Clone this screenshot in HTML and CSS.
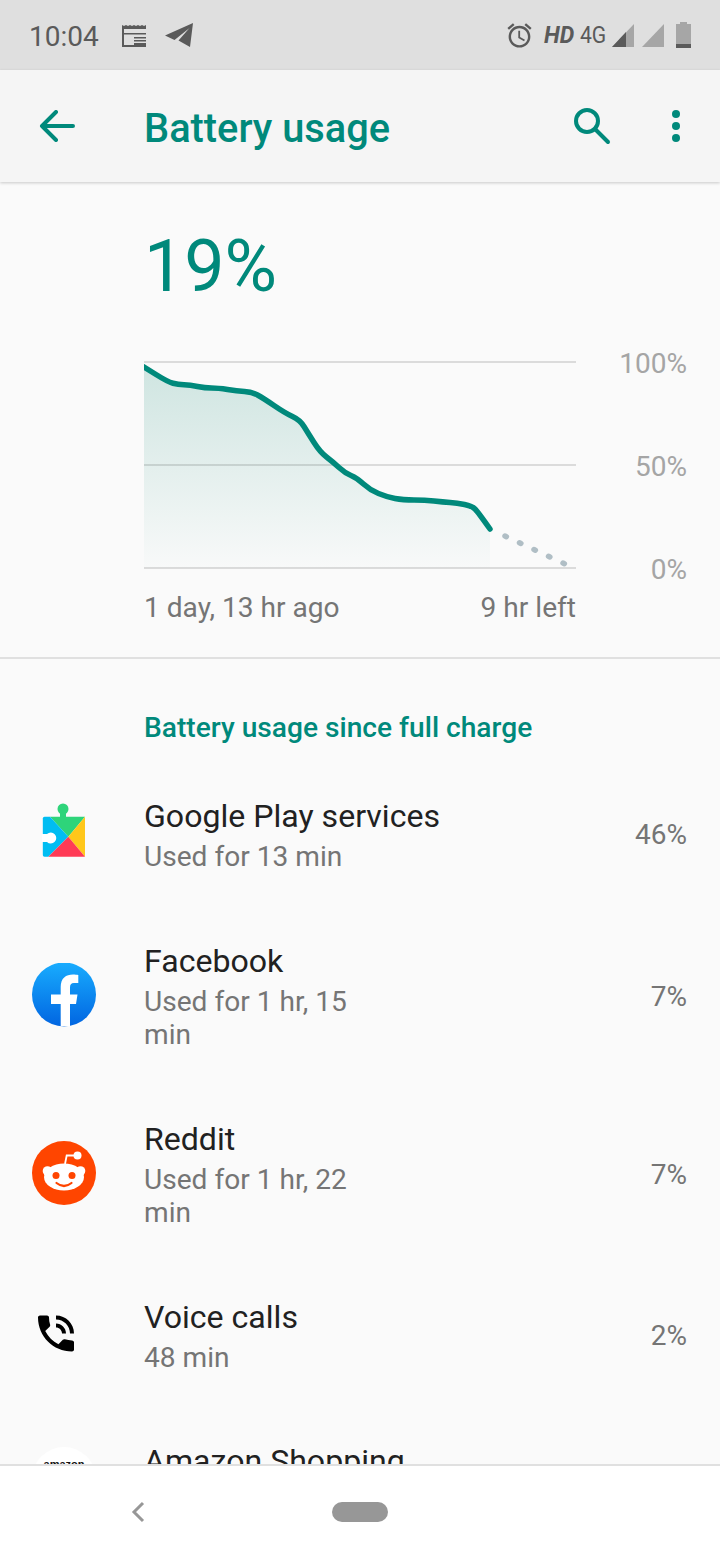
FILE: index.html
```html
<!DOCTYPE html>
<html lang="en">
<head>
<meta charset="utf-8">
<title>Battery usage</title>
<link rel="stylesheet" href="styles.css">
</head>
<body>
<div class="screen">
  <header class="status">
    <span class="time">10:04</span>
    <svg class="st-cal" width="26" height="23" viewBox="0 0 26 23"><path fill="#5a5a5a" d="M0 1l2 1 2-1 2 1 2-1 2 1 2-1 2 1 2-1 2 1 2-1 2 1 2-1v22H0z"/><path fill="#dfdfdf" d="M2 5h22v16H2z"/><path fill="#5a5a5a" d="M2 9h22v1.500H2zM12 13h12v1.500H12zM12 16h12v1.500H12zM12 19h12v2H12z"/></svg>
    <svg class="st-tg" width="28" height="24" viewBox="0 0 28 24"><path fill="#5a5a5a" d="M28 0L0 12.500l9.500 4.500L24.500 5 13.500 17.500 25 24z"/></svg>
    <span class="st-spacer"></span>
    <svg class="st-alarm" width="29" height="29" viewBox="0 0 24 24"><path fill="#5a5a5a" d="M22 5.720l-4.600-3.860-1.290 1.530 4.600 3.860L22 5.720zM7.880 3.390L6.600 1.860 2 5.710l1.290 1.530 4.590-3.850zM12.500 8H11v6l4.750 2.850.75-1.230-4-2.370V8zM12 4c-4.970 0-9 4.030-9 9s4.020 9 9 9c4.970 0 9-4.030 9-9s-4.030-9-9-9zm0 16c-3.870 0-7-3.130-7-7s3.130-7 7-7 7 3.130 7 7-3.130 7-7 7z"/></svg>
    <span class="st-hd">HD</span>
    <span class="st-4g">4G</span>
    <svg class="st-sig1" width="22" height="23" viewBox="0 0 22 23"><path fill="#a6a6a6" d="M22 0v23H0z"/><path fill="#5a5a5a" d="M14 8v15H0z"/></svg>
    <svg class="st-sig2" width="22" height="23" viewBox="0 0 22 23"><path fill="#a6a6a6" d="M22 0v23H0z"/></svg>
    <svg class="st-bat" width="15" height="26" viewBox="0 0 15 26"><path fill="#a6a6a6" d="M4 0h7v2h4v24H0V2h4z"/><path fill="#5a5a5a" d="M0 22h15v4H0z"/></svg>
  </header>

  <div class="toolbar">
    <svg class="tb-back" width="36" height="32" viewBox="0 0 36 32"><path fill="none" stroke="#00897b" stroke-width="4" stroke-linecap="round" stroke-linejoin="round" d="M34 16H3M17 2L3 16l14 14"/></svg>
    <h1 class="tb-title">Battery usage</h1>
    <svg class="tb-search" width="38" height="38" viewBox="0 0 38 38"><circle cx="14" cy="14" r="11" fill="none" stroke="#00897b" stroke-width="4"/><path stroke="#00897b" stroke-width="4" stroke-linecap="round" d="M22 22l13 13"/></svg>
    <svg class="tb-more" width="8" height="32" viewBox="0 0 8 32"><circle cx="4" cy="4" r="4" fill="#00897b"/><circle cx="4" cy="16" r="4" fill="#00897b"/><circle cx="4" cy="28" r="4" fill="#00897b"/></svg>
  </div>

  <main class="content">
    <section class="summary">
      <div class="percent">19%</div>
      <div class="chart-row">
        <div class="chart-col">
          <svg class="chart" width="432" height="210" viewBox="144 360 432 210">
            <defs>
              <linearGradient id="area" x1="0" y1="0" x2="0" y2="1">
                <stop offset="0" stop-color="#cfe5e1"/>
                <stop offset="1" stop-color="#f8f9f9"/>
              </linearGradient>
            </defs>
            <path fill="url(#area)" d="M144 367L156 374.500Q168 382 173 383.250Q178 384.500 184 384.750Q190 385 197.500 386.500Q205 388 211.500 388Q218 388 227.500 389.500Q237 391 244.500 391.500Q252 392 257.500 395Q263 398 274 405.500Q285 413 292.500 416.500Q300 420 304 426.500Q308 433 314 442.500Q320 452 326.500 457Q333 462 339 467.500Q345 473 351 475.500Q357 478 363.500 484Q370 490 378.500 493.500Q387 497 395 498.500Q403 500 414 500Q425 500 434 501Q443 502 450 502.500Q457 503 464.500 504.500Q472 506 475 509Q478 512 490 529V568H144z"/>
            <path class="grid" d="M144 362H576M144 465H576M144 568H576"/>
            <path class="dots" d="M505 536L565 564"/>
            <path class="line" d="M144 367L156 374.500Q168 382 173 383.250Q178 384.500 184 384.750Q190 385 197.500 386.500Q205 388 211.500 388Q218 388 227.500 389.500Q237 391 244.500 391.500Q252 392 257.500 395Q263 398 274 405.500Q285 413 292.500 416.500Q300 420 304 426.500Q308 433 314 442.500Q320 452 326.500 457Q333 462 339 467.500Q345 473 351 475.500Q357 478 363.500 484Q370 490 378.500 493.500Q387 497 395 498.500Q403 500 414 500Q425 500 434 501Q443 502 450 502.500Q457 503 464.500 504.500Q472 506 475 509Q478 512 490 529"/>
          </svg>
          <div class="axis-x"><span>1 day, 13 hr ago</span><span>9 hr left</span></div>
        </div>
        <div class="axis-y"><span>100%</span><span>50%</span><span>0%</span></div>
      </div>
    </section>

    <h2 class="section-title">Battery usage since full charge</h2>

    <div class="row">
      <svg class="app-icon" width="64" height="64" viewBox="0 0 64 64">
        <circle cx="31" cy="7" r="5.500" fill="#2ed47a"/>
        <path fill="#2ed47a" d="M28 8h6v8h-6zM18 14.700h35L36.300 34.700z"/>
        <path fill="#00bdf2" d="M12.500 14.700H18l18.300 20-20 20h-3.800a1.700 1.700 0 0 1-1.700-1.700V16.400a1.700 1.700 0 0 1 1.700-1.700z"/>
        <path fill="#ffc71a" d="M53 14.700v40L36.300 34.700z"/>
        <path fill="#ff3a55" d="M36.300 34.700L53 54.700H16.300z"/>
        <path fill="#fff" d="M10 32h5a5.500 5.500 0 1 1 0 8h-5z"/>
      </svg>
      <div class="row-text">
        <div class="row-title">Google Play services</div>
        <div class="row-sub">Used for 13 min</div>
      </div>
      <span class="row-pct">46%</span>
    </div>

    <div class="row">
      <svg class="app-icon" width="64" height="64" viewBox="0 0 64 64">
        <defs>
          <linearGradient id="fb" x1="0" y1="0" x2="0" y2="1">
            <stop offset="0" stop-color="#18acfe"/>
            <stop offset="1" stop-color="#0165e1"/>
          </linearGradient>
        </defs>
        <circle cx="32" cy="31.500" r="32" fill="url(#fb)"/>
        <path fill="#fff" d="M28.700 63.300V41H19v-9.500h9.700V24c0-9 5.300-12.500 12.300-12.500 2 0 4 .2 5.300.5v8H42c-3 0-4 1.500-4 4.500v7h7.500L44 41h-6v22.300z"/>
      </svg>
      <div class="row-text">
        <div class="row-title">Facebook</div>
        <div class="row-sub">Used for 1 hr, 15 min</div>
      </div>
      <span class="row-pct">7%</span>
    </div>

    <div class="row">
      <svg class="app-icon" width="64" height="64" viewBox="0 0 64 64">
        <circle cx="32" cy="32" r="32" fill="#ff4500"/>
        <circle cx="15.500" cy="30" r="4.800" fill="#fff"/>
        <circle cx="48.500" cy="30" r="4.800" fill="#fff"/>
        <ellipse cx="32" cy="36" rx="20" ry="13.500" fill="#fff"/>
        <path fill="none" stroke="#fff" stroke-width="1.800" d="M33 23l1.700-8.500H45"/>
        <circle cx="45.500" cy="14.500" r="4" fill="#fff"/>
        <circle cx="24" cy="34.500" r="3.500" fill="#ff4500"/>
        <circle cx="40" cy="34.500" r="3.500" fill="#ff4500"/>
        <path fill="none" stroke="#ff4500" stroke-width="2.200" stroke-linecap="round" d="M24.500 42Q32 48 39.500 42"/>
      </svg>
      <div class="row-text">
        <div class="row-title">Reddit</div>
        <div class="row-sub">Used for 1 hr, 22 min</div>
      </div>
      <span class="row-pct">7%</span>
    </div>

    <div class="row">
      <svg class="app-icon" width="64" height="64" viewBox="0 -3.750 32 32">
        <path fill="#000" d="M20 15.500c-1.250 0-2.450-.2-3.570-.57-.35-.11-.74-.03-1.020.24l-2.200 2.200c-2.830-1.440-5.150-3.750-6.590-6.590l2.200-2.210c.28-.26.36-.65.25-1C8.700 6.450 8.500 5.250 8.500 4c0-.55-.45-1-1-1H4c-.55 0-1 .45-1 1 0 9.390 7.610 17 17 17 .55 0 1-.45 1-1v-3.500c0-.55-.45-1-1-1zM19 12h2c0-4.970-4.030-9-9-9v2c3.870 0 7 3.130 7 7zm-4 0h2c0-2.760-2.240-5-5-5v2c1.660 0 3 1.340 3 3z"/>
      </svg>
      <div class="row-text">
        <div class="row-title">Voice calls</div>
        <div class="row-sub">48 min</div>
      </div>
      <span class="row-pct">2%</span>
    </div>

    <div class="row">
      <svg class="app-icon" width="64" height="64" viewBox="0 0 64 64">
        <circle cx="32" cy="32" r="32" fill="#fff"/>
        <text x="32" y="21" text-anchor="middle" class="amazon">amazon</text>
      </svg>
      <div class="row-text">
        <div class="row-title">Amazon Shopping</div>
        <div class="row-sub">Used for 5 min</div>
      </div>
      <span class="row-pct">2%</span>
    </div>
  </main>

  <nav class="navbar">
    <svg class="nav-back" width="14" height="22" viewBox="0 0 14 22"><path fill="none" stroke="#979797" stroke-width="3" d="M12 2L3 11l9 9"/></svg>
    <span class="nav-pill"></span>
  </nav>
</div>
</body>
</html>
```
FILE: styles.css
```css
* { box-sizing: border-box; }
html, body { margin: 0; padding: 0; }
body { font-family: Roboto, "Liberation Sans", sans-serif; background: #fafafa; }
svg { display: block; flex: none; }

.screen { width: 720px; height: 1560px; display: flex; flex-direction: column; overflow: hidden; }

/* status bar */
.status { height: 70px; flex: none; background: #dfdfdf; display: flex; align-items: center; color: #5a5a5a; padding-left: 29px; }
.time { font-size: 28px; line-height: 34px; width: 93px; margin-top: 3px; }
.st-cal { margin-top: 1px; }
.st-tg { margin-left: 17px; }
.st-spacer { flex: 1; }
.st-alarm { margin-top: 1px; }
.st-hd { font-size: 23px; font-weight: 700; font-style: italic; margin-left: 10px; width: 34px; margin-top: 0; }
.st-4g { font-size: 24px; margin-left: 2px; width: 30px; transform: scaleX(.88); transform-origin: left center; }
.st-sig1 { margin-left: 2px; margin-top: 1px; }
.st-sig2 { margin-left: 8px; margin-top: 1px; }
.st-bat { margin-left: 12px; margin-right: 29px; }

/* toolbar */
.toolbar { height: 112px; flex: none; background: #f5f5f5; display: flex; align-items: center; box-shadow: 0 1px 3px rgba(0,0,0,.2); position: relative; z-index: 1; padding-left: 39px; }
.tb-title { flex: 1; margin: 6px 0 0 69px; font-size: 39.800px; line-height: 44px; font-weight: 500; color: #00897b; }
.tb-more { margin: 0 40px 0 61px; }

/* content */
.content { flex: 1; min-height: 0; overflow: hidden; background: #fafafa; }
.summary { height: 477px; border-bottom: 2px solid #e0e0e0; padding: 43px 33px 0 144px; }
.percent { font-size: 71.700px; line-height: 84px; color: #00897b; margin-bottom: 38px; }
.chart-row { display: flex; align-items: flex-start; justify-content: space-between; }
.chart { margin-top: 13px; }
.grid { fill: none; stroke: rgba(0,0,0,.12); stroke-width: 2; }
.line { fill: none; stroke: #00897b; stroke-width: 5.500; stroke-linecap: round; stroke-linejoin: round; }
.dots { fill: none; stroke: #b0bec5; stroke-width: 5.500; stroke-linecap: round; stroke-dasharray: 1.500 14.500; }
.axis-x { display: flex; justify-content: space-between; font-size: 28.100px; line-height: 34px; color: #757575; margin-top: 21px; }
.axis-y { height: 240px; display: flex; flex-direction: column; justify-content: space-between; align-items: flex-end; font-size: 28px; line-height: 34px; color: #a5a5a5; }

.section-title { margin: 0; height: 104px; padding: 51px 0 0 144px; font-size: 28.150px; line-height: 36px; font-weight: 500; color: #00897b; }

/* rows */
.row { display: flex; align-items: center; padding: 34px 33px 34px 32px; }
.app-icon { margin: -3px 48px 0 0; }
.row-text { flex: 1; min-width: 0; }
.row-title { font-size: 32.100px; line-height: 38px; color: #212121; white-space: nowrap; }
.row-sub { font-size: 28.100px; line-height: 33.500px; color: #757575; max-width: 230px; margin-top: 5px; }
.row-pct { font-size: 28px; line-height: 34px; color: #757575; }
.amazon { font-size: 11px; font-weight: 700; fill: #111; font-family: "Liberation Sans", sans-serif; }

/* nav */
.navbar { height: 96px; flex: none; background: #fff; border-top: 2px solid #e0e0e0; display: flex; align-items: center; position: relative; padding-left: 131px; }
.nav-back { margin-top: -2px; }
.nav-pill { width: 56px; height: 20px; border-radius: 10px; background: #979797; margin-left: 187px; margin-top: -2px; }
```
